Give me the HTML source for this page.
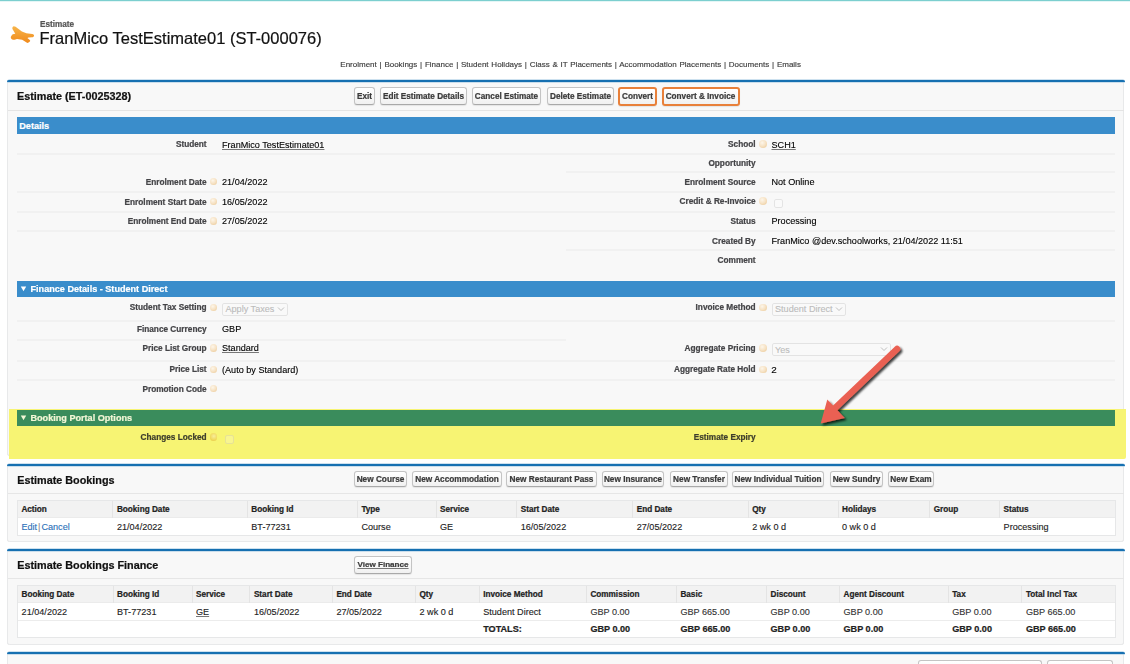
<!DOCTYPE html>
<html><head><meta charset="utf-8"><title>Estimate</title>
<style>
html,body{margin:0;padding:0;}
body{width:1130px;height:664px;overflow:hidden;position:relative;background:#fff;font-family:"Liberation Sans", sans-serif;}
.t{position:absolute;white-space:nowrap;font-family:"Liberation Sans", sans-serif;-webkit-text-stroke:0.22px currentColor;}
#root{position:absolute;left:0;top:0;width:1130px;height:664px;overflow:hidden;filter:blur(0.4px);}
</style></head><body><div id="root">
<div style="position:absolute;left:0px;top:0px;width:1130px;height:1px;background:#7ccfcf;"></div>
<div style="position:absolute;left:0px;top:1px;width:1130px;height:1px;background:#e4f6f6;"></div>
<svg style="position:absolute;left:8px;top:22px" width="30" height="24" viewBox="8 22 30 24">
<defs><linearGradient id="pg" x1="0" y1="0" x2="0" y2="1"><stop offset="0" stop-color="#f7b54a"/><stop offset="1" stop-color="#f08a1c"/></linearGradient></defs>
<path d="M13.7 26.2 C15.2 26.2 16.2 27.2 16.9 27.8 L21.9 31.6 L26.4 33.2 L32.2 34.0 C33.6 34.3 34.3 35.0 34.0 36.0 C33.7 37.0 32.8 37.3 32.0 37.3 L28.5 37.6 L27.4 37.9 L29.8 40.0 C30.4 40.6 30.3 41.2 29.6 41.8 L28.5 42.6 C27.9 43 27.3 43 26.6 42.6 L22.2 39.8 L17 38.9 L14.6 39.8 C13.2 40 11.5 39.2 11 38.2 C10.6 37.4 10.9 36.4 11.6 35.6 L12.7 34.2 L15.3 33.8 L12.6 29.2 C12 28 12.4 26.4 13.7 26.2 Z" fill="url(#pg)"/>
</svg>
<div class="t" style="left:40.00px;top:15px;font-size:8.2px;line-height:20px;font-weight:700;color:#555;">Estimate</div>
<div class="t" style="left:39.50px;top:28px;font-size:16.5px;line-height:20px;font-weight:400;color:#111;-webkit-text-stroke:0.12px currentColor;-webkit-text-stroke:0.2px currentColor;">FranMico TestEstimate01 (ST-000076)</div>
<div class="t" style="left:340.30px;top:55px;font-size:8px;line-height:20px;font-weight:400;color:#3c3c3c;-webkit-text-stroke:0.12px currentColor;word-spacing:0.55px;-webkit-text-stroke:0.15px currentColor;">Enrolment | Bookings | Finance | Student Holidays | Class &amp; IT Placements | Accommodation Placements | Documents | Emails</div>
<div style="position:absolute;left:7px;top:80px;width:1117px;height:376px;background:#f8f8f8;border-radius:4px 4px 3px 3px;box-shadow:inset 1px 0 0 #e8e9ea,inset -1px 0 0 #e8e9ea,inset 0 -1px 0 #e8e9ea;"></div>
<div style="position:absolute;left:7px;top:80px;width:1117.5px;height:2px;background:#1670b1;border-radius:3px 3px 0 0;box-shadow:0 -0.5px 0.5px #9cc3e0,0 0.5px 0.5px #9cc3e0;"></div>
<div class="t" style="left:17.00px;top:86px;font-size:10.8px;line-height:20px;font-weight:700;color:#111;">Estimate (ET-0025328)</div>
<div style="position:absolute;left:354px;top:87px;width:19px;height:16px;border:1px solid #c4c4c4;border-bottom-color:#a9a9a9;border-radius:3px;background:linear-gradient(#ffffff,#f1f1f1);box-shadow:0 1px 1px rgba(0,0,0,0.08);"></div>
<div class="t" style="left:364.50px;transform:translateX(-50%);top:87px;font-size:8.2px;line-height:20px;font-weight:700;color:#3a3a3a;">Exit</div>
<div style="position:absolute;left:380px;top:87px;width:85px;height:16px;border:1px solid #c4c4c4;border-bottom-color:#a9a9a9;border-radius:3px;background:linear-gradient(#ffffff,#f1f1f1);box-shadow:0 1px 1px rgba(0,0,0,0.08);"></div>
<div class="t" style="left:423.50px;transform:translateX(-50%);top:87px;font-size:8.2px;line-height:20px;font-weight:700;color:#3a3a3a;">Edit Estimate Details</div>
<div style="position:absolute;left:472px;top:87px;width:67px;height:16px;border:1px solid #c4c4c4;border-bottom-color:#a9a9a9;border-radius:3px;background:linear-gradient(#ffffff,#f1f1f1);box-shadow:0 1px 1px rgba(0,0,0,0.08);"></div>
<div class="t" style="left:506.50px;transform:translateX(-50%);top:87px;font-size:8.2px;line-height:20px;font-weight:700;color:#3a3a3a;">Cancel Estimate</div>
<div style="position:absolute;left:547px;top:87px;width:65px;height:16px;border:1px solid #c4c4c4;border-bottom-color:#a9a9a9;border-radius:3px;background:linear-gradient(#ffffff,#f1f1f1);box-shadow:0 1px 1px rgba(0,0,0,0.08);"></div>
<div class="t" style="left:580.50px;transform:translateX(-50%);top:87px;font-size:8.2px;line-height:20px;font-weight:700;color:#3a3a3a;">Delete Estimate</div>
<div style="position:absolute;left:618px;top:86.5px;width:35px;height:15.0px;border:2px solid #e8803a;border-radius:3px;background:linear-gradient(#ffffff,#f1f1f1);box-shadow:0 1px 1px rgba(0,0,0,0.08);"></div>
<div class="t" style="left:637.50px;transform:translateX(-50%);top:87px;font-size:8.2px;line-height:20px;font-weight:700;color:#3a3a3a;">Convert</div>
<div style="position:absolute;left:661.5px;top:86.5px;width:74.0px;height:15.0px;border:2px solid #e8803a;border-radius:3px;background:linear-gradient(#ffffff,#f1f1f1);box-shadow:0 1px 1px rgba(0,0,0,0.08);"></div>
<div class="t" style="left:700.50px;transform:translateX(-50%);top:87px;font-size:8.2px;line-height:20px;font-weight:700;color:#3a3a3a;">Convert &amp; Invoice</div>
<div style="position:absolute;left:8px;top:110px;width:1116px;height:1px;background:#e4e4e4;"></div>
<div style="position:absolute;left:17px;top:117px;width:1098px;height:17px;background:#3a8dcb;"></div>
<div class="t" style="left:19.30px;top:116px;font-size:9.1px;line-height:20px;font-weight:700;color:#fff;">Details</div>
<div style="position:absolute;left:17px;top:153px;width:1098px;height:2px;background:#f1f1f1;"></div>
<div style="position:absolute;left:17px;top:191px;width:1098px;height:2px;background:#f1f1f1;"></div>
<div style="position:absolute;left:17px;top:211px;width:1098px;height:2px;background:#f1f1f1;"></div>
<div style="position:absolute;left:17px;top:230px;width:1098px;height:2px;background:#f1f1f1;"></div>
<div style="position:absolute;left:566px;top:171px;width:549px;height:2px;background:#f1f1f1;"></div>
<div style="position:absolute;left:566px;top:249px;width:549px;height:2px;background:#f1f1f1;"></div>
<div class="t" style="right:923.40px;top:135px;font-size:8.25px;line-height:20px;font-weight:700;color:#444447;">Student</div>
<div class="t" style="left:222.00px;top:135px;font-size:9.1px;line-height:20px;font-weight:400;color:#000;-webkit-text-stroke:0.12px currentColor;text-decoration:underline;text-decoration-color:#777;">FranMico TestEstimate01</div>
<div class="t" style="right:923.40px;top:173px;font-size:8.25px;line-height:20px;font-weight:700;color:#444447;">Enrolment Date</div>
<div style="position:absolute;left:209.70px;top:177.70px;width:7.8px;height:7.8px;border-radius:50%;background:radial-gradient(circle at 40% 35%,#fdf6ea 0,#f6e2c4 50%,#e8c48e 100%);"></div>
<div class="t" style="left:222.00px;top:172px;font-size:9.1px;line-height:20px;font-weight:400;color:#000;-webkit-text-stroke:0.12px currentColor;">21/04/2022</div>
<div class="t" style="right:923.40px;top:193px;font-size:8.25px;line-height:20px;font-weight:700;color:#444447;">Enrolment Start Date</div>
<div style="position:absolute;left:209.70px;top:197.50px;width:7.8px;height:7.8px;border-radius:50%;background:radial-gradient(circle at 40% 35%,#fdf6ea 0,#f6e2c4 50%,#e8c48e 100%);"></div>
<div class="t" style="left:222.00px;top:192px;font-size:9.1px;line-height:20px;font-weight:400;color:#000;-webkit-text-stroke:0.12px currentColor;">16/05/2022</div>
<div class="t" style="right:923.40px;top:212px;font-size:8.25px;line-height:20px;font-weight:700;color:#444447;">Enrolment End Date</div>
<div style="position:absolute;left:209.70px;top:217.10px;width:7.8px;height:7.8px;border-radius:50%;background:radial-gradient(circle at 40% 35%,#fdf6ea 0,#f6e2c4 50%,#e8c48e 100%);"></div>
<div class="t" style="left:222.00px;top:211px;font-size:9.1px;line-height:20px;font-weight:400;color:#000;-webkit-text-stroke:0.12px currentColor;">27/05/2022</div>
<div class="t" style="right:374.40px;top:135px;font-size:8.25px;line-height:20px;font-weight:700;color:#444447;">School</div>
<div style="position:absolute;left:758.80px;top:140.20px;width:7.8px;height:7.8px;border-radius:50%;background:radial-gradient(circle at 40% 35%,#fdf6ea 0,#f6e2c4 50%,#e8c48e 100%);"></div>
<div class="t" style="left:771.50px;top:135px;font-size:9.1px;line-height:20px;font-weight:400;color:#000;-webkit-text-stroke:0.12px currentColor;text-decoration:underline;text-decoration-color:#777;">SCH1</div>
<div class="t" style="right:374.40px;top:154px;font-size:8.25px;line-height:20px;font-weight:700;color:#444447;">Opportunity</div>
<div class="t" style="right:374.40px;top:173px;font-size:8.25px;line-height:20px;font-weight:700;color:#444447;">Enrolment Source</div>
<div class="t" style="left:771.50px;top:172px;font-size:9.1px;line-height:20px;font-weight:400;color:#000;-webkit-text-stroke:0.12px currentColor;">Not Online</div>
<div class="t" style="right:374.40px;top:192px;font-size:8.25px;line-height:20px;font-weight:700;color:#444447;">Credit &amp; Re-Invoice</div>
<div style="position:absolute;left:758.80px;top:197.10px;width:7.8px;height:7.8px;border-radius:50%;background:radial-gradient(circle at 40% 35%,#fdf6ea 0,#f6e2c4 50%,#e8c48e 100%);"></div>
<div style="position:absolute;left:774px;top:198.5px;width:9px;height:9px;border:1px solid #e4e4e4;border-radius:2px;background:#fafafa;box-sizing:border-box;"></div>
<div class="t" style="right:374.40px;top:212px;font-size:8.25px;line-height:20px;font-weight:700;color:#444447;">Status</div>
<div class="t" style="left:771.50px;top:211px;font-size:9.1px;line-height:20px;font-weight:400;color:#000;-webkit-text-stroke:0.12px currentColor;">Processing</div>
<div class="t" style="right:374.40px;top:232px;font-size:8.25px;line-height:20px;font-weight:700;color:#444447;">Created By</div>
<div class="t" style="left:771.50px;top:231px;font-size:9.1px;line-height:20px;font-weight:400;color:#000;-webkit-text-stroke:0.12px currentColor;">FranMico @dev.schoolworks, 21/04/2022 11:51</div>
<div class="t" style="right:374.40px;top:251px;font-size:8.25px;line-height:20px;font-weight:700;color:#444447;">Comment</div>
<div style="position:absolute;left:17px;top:281px;width:1098px;height:16px;background:#3a8dcb;"></div>
<svg style="position:absolute;left:20px;top:286px" width="7" height="6" viewBox="0 0 7 6"><path d="M0.8 0.6 L6.2 0.6 L3.5 5.2 Z" fill="#fff"/></svg>
<div class="t" style="left:30.50px;top:279px;font-size:9.1px;line-height:20px;font-weight:700;color:#fff;">Finance Details - Student Direct</div>
<div style="position:absolute;left:17px;top:320px;width:1098px;height:2px;background:#f1f1f1;"></div>
<div style="position:absolute;left:17px;top:339px;width:549px;height:2px;background:#f1f1f1;"></div>
<div style="position:absolute;left:17px;top:360px;width:1098px;height:2px;background:#f1f1f1;"></div>
<div style="position:absolute;left:17px;top:379px;width:1098px;height:2px;background:#f1f1f1;"></div>
<div class="t" style="right:923.40px;top:298px;font-size:8.25px;line-height:20px;font-weight:700;color:#444447;">Student Tax Setting</div>
<div style="position:absolute;left:209.70px;top:303.60px;width:7.8px;height:7.8px;border-radius:50%;background:radial-gradient(circle at 40% 35%,#fdf6ea 0,#f6e2c4 50%,#e8c48e 100%);"></div>
<div style="position:absolute;left:222px;top:303px;width:66px;height:12.5px;box-sizing:border-box;border:1px solid #e3e3e3;border-radius:2px;background:#f9f9f9;"></div>
<div class="t" style="left:225.50px;top:299px;font-size:9.1px;line-height:20px;font-weight:400;color:#bcbcbc;-webkit-text-stroke:0.12px currentColor;">Apply Taxes</div>
<svg style="position:absolute;left:277px;top:306px" width="8" height="6" viewBox="0 0 8 6"><path d="M1 1.5 L4 4.5 L7 1.5" fill="none" stroke="#b8b8b8" stroke-width="0.9"/></svg>
<div class="t" style="right:923.40px;top:320px;font-size:8.25px;line-height:20px;font-weight:700;color:#444447;">Finance Currency</div>
<div class="t" style="left:222.00px;top:319px;font-size:9.1px;line-height:20px;font-weight:400;color:#000;-webkit-text-stroke:0.12px currentColor;">GBP</div>
<div class="t" style="right:923.40px;top:339px;font-size:8.25px;line-height:20px;font-weight:700;color:#444447;">Price List Group</div>
<div style="position:absolute;left:209.70px;top:344.30px;width:7.8px;height:7.8px;border-radius:50%;background:radial-gradient(circle at 40% 35%,#fdf6ea 0,#f6e2c4 50%,#e8c48e 100%);"></div>
<div class="t" style="left:222.00px;top:338px;font-size:9.1px;line-height:20px;font-weight:400;color:#000;-webkit-text-stroke:0.12px currentColor;text-decoration:underline;text-decoration-color:#777;">Standard</div>
<div class="t" style="right:923.40px;top:360px;font-size:8.25px;line-height:20px;font-weight:700;color:#444447;">Price List</div>
<div style="position:absolute;left:209.70px;top:365.60px;width:7.8px;height:7.8px;border-radius:50%;background:radial-gradient(circle at 40% 35%,#fdf6ea 0,#f6e2c4 50%,#e8c48e 100%);"></div>
<div class="t" style="left:222.00px;top:360px;font-size:9.1px;line-height:20px;font-weight:400;color:#000;-webkit-text-stroke:0.12px currentColor;">(Auto by Standard)</div>
<div class="t" style="right:923.40px;top:380px;font-size:8.25px;line-height:20px;font-weight:700;color:#444447;">Promotion Code</div>
<div style="position:absolute;left:209.70px;top:384.70px;width:7.8px;height:7.8px;border-radius:50%;background:radial-gradient(circle at 40% 35%,#fdf6ea 0,#f6e2c4 50%,#e8c48e 100%);"></div>
<div class="t" style="right:374.40px;top:298px;font-size:8.25px;line-height:20px;font-weight:700;color:#444447;">Invoice Method</div>
<div style="position:absolute;left:758.80px;top:303.60px;width:7.8px;height:7.8px;border-radius:50%;background:radial-gradient(circle at 40% 35%,#fdf6ea 0,#f6e2c4 50%,#e8c48e 100%);"></div>
<div style="position:absolute;left:771.5px;top:303px;width:74.5px;height:12.5px;box-sizing:border-box;border:1px solid #e3e3e3;border-radius:2px;background:#f9f9f9;"></div>
<div class="t" style="left:775.00px;top:299px;font-size:9.1px;line-height:20px;font-weight:400;color:#bcbcbc;-webkit-text-stroke:0.12px currentColor;">Student Direct</div>
<svg style="position:absolute;left:835px;top:306px" width="8" height="6" viewBox="0 0 8 6"><path d="M1 1.5 L4 4.5 L7 1.5" fill="none" stroke="#b8b8b8" stroke-width="0.9"/></svg>
<div class="t" style="right:374.40px;top:339px;font-size:8.25px;line-height:20px;font-weight:700;color:#444447;">Aggregate Pricing</div>
<div style="position:absolute;left:758.80px;top:344.30px;width:7.8px;height:7.8px;border-radius:50%;background:radial-gradient(circle at 40% 35%,#fdf6ea 0,#f6e2c4 50%,#e8c48e 100%);"></div>
<div style="position:absolute;left:771.5px;top:343.3px;width:119.5px;height:13.199999999999989px;box-sizing:border-box;border:1px solid #e3e3e3;border-radius:2px;background:#f9f9f9;"></div>
<div class="t" style="left:775.00px;top:340px;font-size:9.1px;line-height:20px;font-weight:400;color:#bcbcbc;-webkit-text-stroke:0.12px currentColor;">Yes</div>
<svg style="position:absolute;left:880px;top:346.3px" width="8" height="6" viewBox="0 0 8 6"><path d="M1 1.5 L4 4.5 L7 1.5" fill="none" stroke="#b8b8b8" stroke-width="0.9"/></svg>
<div class="t" style="right:374.40px;top:360px;font-size:8.25px;line-height:20px;font-weight:700;color:#444447;">Aggregate Rate Hold</div>
<div style="position:absolute;left:758.80px;top:365.60px;width:7.8px;height:7.8px;border-radius:50%;background:radial-gradient(circle at 40% 35%,#fdf6ea 0,#f6e2c4 50%,#e8c48e 100%);"></div>
<div class="t" style="left:771.20px;top:360px;font-size:9.9px;line-height:20px;font-weight:400;color:#000;-webkit-text-stroke:0.12px currentColor;">2</div>
<div style="position:absolute;left:9px;top:408.5px;width:1116.5px;height:50.7px;background:#f7f473;border-radius:0 0 2px 0;"></div>
<div style="position:absolute;left:17px;top:409.5px;width:1098px;height:16.80000000000001px;background:#3a8c5c;"></div>
<svg style="position:absolute;left:20px;top:415px" width="7" height="6" viewBox="0 0 7 6"><path d="M0.8 0.6 L6.2 0.6 L3.5 5.2 Z" fill="#f3f7d6"/></svg>
<div class="t" style="left:30.50px;top:408px;font-size:9.1px;line-height:20px;font-weight:700;color:#f3f7d6;">Booking Portal Options</div>
<div class="t" style="right:923.40px;top:428px;font-size:8.25px;line-height:20px;font-weight:700;color:#3d3d2c;">Changes Locked</div>
<div style="position:absolute;left:209.70px;top:433.10px;width:7.8px;height:7.8px;border-radius:50%;background:radial-gradient(circle at 55% 40%,#f8ee9a 0,#f0d85c 60%,#e2c040 100%);"></div>
<div style="position:absolute;left:225px;top:434.5px;width:9px;height:9px;border:1px solid #e6e296;border-radius:2px;box-sizing:border-box;background:#f8f590;"></div>
<div class="t" style="right:374.40px;top:428px;font-size:8.25px;line-height:20px;font-weight:700;color:#3d3d2c;">Estimate Expiry</div>
<div style="position:absolute;left:7px;top:464px;width:1117px;height:77.5px;background:#f8f8f8;border-radius:4px 4px 3px 3px;box-shadow:inset 1px 0 0 #e8e9ea,inset -1px 0 0 #e8e9ea,inset 0 -1px 0 #e8e9ea;"></div>
<div style="position:absolute;left:7px;top:464px;width:1117.5px;height:2px;background:#1670b1;border-radius:3px 3px 0 0;box-shadow:0 -0.5px 0.5px #9cc3e0,0 0.5px 0.5px #9cc3e0;"></div>
<div class="t" style="left:17.30px;top:470px;font-size:10.8px;line-height:20px;font-weight:700;color:#111;">Estimate Bookings</div>
<div style="position:absolute;left:354px;top:471.3px;width:51px;height:14.199999999999989px;border:1px solid #c4c4c4;border-bottom-color:#a9a9a9;border-radius:3px;background:linear-gradient(#ffffff,#f1f1f1);box-shadow:0 1px 1px rgba(0,0,0,0.08);"></div>
<div class="t" style="left:380.50px;transform:translateX(-50%);top:470px;font-size:8.25px;line-height:20px;font-weight:700;color:#3a3a3a;">New Course</div>
<div style="position:absolute;left:412px;top:471.3px;width:88px;height:14.199999999999989px;border:1px solid #c4c4c4;border-bottom-color:#a9a9a9;border-radius:3px;background:linear-gradient(#ffffff,#f1f1f1);box-shadow:0 1px 1px rgba(0,0,0,0.08);"></div>
<div class="t" style="left:457.00px;transform:translateX(-50%);top:470px;font-size:8.25px;line-height:20px;font-weight:700;color:#3a3a3a;">New Accommodation</div>
<div style="position:absolute;left:506px;top:471.3px;width:89px;height:14.199999999999989px;border:1px solid #c4c4c4;border-bottom-color:#a9a9a9;border-radius:3px;background:linear-gradient(#ffffff,#f1f1f1);box-shadow:0 1px 1px rgba(0,0,0,0.08);"></div>
<div class="t" style="left:551.50px;transform:translateX(-50%);top:470px;font-size:8.25px;line-height:20px;font-weight:700;color:#3a3a3a;">New Restaurant Pass</div>
<div style="position:absolute;left:602px;top:471.3px;width:60px;height:14.199999999999989px;border:1px solid #c4c4c4;border-bottom-color:#a9a9a9;border-radius:3px;background:linear-gradient(#ffffff,#f1f1f1);box-shadow:0 1px 1px rgba(0,0,0,0.08);"></div>
<div class="t" style="left:633.00px;transform:translateX(-50%);top:470px;font-size:8.25px;line-height:20px;font-weight:700;color:#3a3a3a;">New Insurance</div>
<div style="position:absolute;left:670px;top:471.3px;width:56px;height:14.199999999999989px;border:1px solid #c4c4c4;border-bottom-color:#a9a9a9;border-radius:3px;background:linear-gradient(#ffffff,#f1f1f1);box-shadow:0 1px 1px rgba(0,0,0,0.08);"></div>
<div class="t" style="left:699.00px;transform:translateX(-50%);top:470px;font-size:8.25px;line-height:20px;font-weight:700;color:#3a3a3a;">New Transfer</div>
<div style="position:absolute;left:732px;top:471.3px;width:90px;height:14.199999999999989px;border:1px solid #c4c4c4;border-bottom-color:#a9a9a9;border-radius:3px;background:linear-gradient(#ffffff,#f1f1f1);box-shadow:0 1px 1px rgba(0,0,0,0.08);"></div>
<div class="t" style="left:778.00px;transform:translateX(-50%);top:470px;font-size:8.25px;line-height:20px;font-weight:700;color:#3a3a3a;">New Individual Tuition</div>
<div style="position:absolute;left:830px;top:471.3px;width:51px;height:14.199999999999989px;border:1px solid #c4c4c4;border-bottom-color:#a9a9a9;border-radius:3px;background:linear-gradient(#ffffff,#f1f1f1);box-shadow:0 1px 1px rgba(0,0,0,0.08);"></div>
<div class="t" style="left:856.50px;transform:translateX(-50%);top:470px;font-size:8.25px;line-height:20px;font-weight:700;color:#3a3a3a;">New Sundry</div>
<div style="position:absolute;left:888px;top:471.3px;width:44px;height:14.199999999999989px;border:1px solid #c4c4c4;border-bottom-color:#a9a9a9;border-radius:3px;background:linear-gradient(#ffffff,#f1f1f1);box-shadow:0 1px 1px rgba(0,0,0,0.08);"></div>
<div class="t" style="left:911.00px;transform:translateX(-50%);top:470px;font-size:8.25px;line-height:20px;font-weight:700;color:#3a3a3a;">New Exam</div>
<div style="position:absolute;left:8px;top:493px;width:1116px;height:1px;background:#e6e6e6;"></div>
<div style="position:absolute;left:17px;top:500px;width:1098.5px;height:36px;background:#fff;box-shadow:inset 0 0 0 1px #e6e7e8;"></div>
<div style="position:absolute;left:18px;top:501px;width:1096.5px;height:16.600000000000023px;background:#f2f2f2;border-bottom:1px solid #ebebeb;box-sizing:border-box;"></div>
<div style="position:absolute;left:112.4px;top:501px;width:1px;height:16.600000000000023px;background:#e4e4e4;"></div>
<div style="position:absolute;left:246.8px;top:501px;width:1px;height:16.600000000000023px;background:#e4e4e4;"></div>
<div style="position:absolute;left:356.9px;top:501px;width:1px;height:16.600000000000023px;background:#e4e4e4;"></div>
<div style="position:absolute;left:435.5px;top:501px;width:1px;height:16.600000000000023px;background:#e4e4e4;"></div>
<div style="position:absolute;left:516.2px;top:501px;width:1px;height:16.600000000000023px;background:#e4e4e4;"></div>
<div style="position:absolute;left:632.2px;top:501px;width:1px;height:16.600000000000023px;background:#e4e4e4;"></div>
<div style="position:absolute;left:747.7px;top:501px;width:1px;height:16.600000000000023px;background:#e4e4e4;"></div>
<div style="position:absolute;left:837.5px;top:501px;width:1px;height:16.600000000000023px;background:#e4e4e4;"></div>
<div style="position:absolute;left:929.2px;top:501px;width:1px;height:16.600000000000023px;background:#e4e4e4;"></div>
<div style="position:absolute;left:999.1px;top:501px;width:1px;height:16.600000000000023px;background:#e4e4e4;"></div>
<div class="t" style="left:21.40px;top:500px;font-size:8.2px;line-height:20px;font-weight:700;color:#222;">Action</div>
<div class="t" style="left:116.90px;top:500px;font-size:8.2px;line-height:20px;font-weight:700;color:#222;">Booking Date</div>
<div class="t" style="left:251.30px;top:500px;font-size:8.2px;line-height:20px;font-weight:700;color:#222;">Booking Id</div>
<div class="t" style="left:361.40px;top:500px;font-size:8.2px;line-height:20px;font-weight:700;color:#222;">Type</div>
<div class="t" style="left:440.00px;top:500px;font-size:8.2px;line-height:20px;font-weight:700;color:#222;">Service</div>
<div class="t" style="left:520.70px;top:500px;font-size:8.2px;line-height:20px;font-weight:700;color:#222;">Start Date</div>
<div class="t" style="left:636.70px;top:500px;font-size:8.2px;line-height:20px;font-weight:700;color:#222;">End Date</div>
<div class="t" style="left:752.20px;top:500px;font-size:8.2px;line-height:20px;font-weight:700;color:#222;">Qty</div>
<div class="t" style="left:842.00px;top:500px;font-size:8.2px;line-height:20px;font-weight:700;color:#222;">Holidays</div>
<div class="t" style="left:933.70px;top:500px;font-size:8.2px;line-height:20px;font-weight:700;color:#222;">Group</div>
<div class="t" style="left:1003.60px;top:500px;font-size:8.2px;line-height:20px;font-weight:700;color:#222;">Status</div>
<div class="t" style="left:21.40px;top:517px;font-size:9.1px;line-height:20px;font-weight:400;color:#2a70b8;-webkit-text-stroke:0.12px currentColor;">Edit<span style="color:#8a8a8a;margin:0 1px">|</span>Cancel</div>
<div class="t" style="left:116.90px;top:517px;font-size:9.1px;line-height:20px;font-weight:400;color:#222;-webkit-text-stroke:0.12px currentColor;">21/04/2022</div>
<div class="t" style="left:251.30px;top:517px;font-size:9.1px;line-height:20px;font-weight:400;color:#222;-webkit-text-stroke:0.12px currentColor;">BT-77231</div>
<div class="t" style="left:361.40px;top:517px;font-size:9.1px;line-height:20px;font-weight:400;color:#222;-webkit-text-stroke:0.12px currentColor;">Course</div>
<div class="t" style="left:440.00px;top:517px;font-size:9.1px;line-height:20px;font-weight:400;color:#222;-webkit-text-stroke:0.12px currentColor;">GE</div>
<div class="t" style="left:520.70px;top:517px;font-size:9.1px;line-height:20px;font-weight:400;color:#222;-webkit-text-stroke:0.12px currentColor;">16/05/2022</div>
<div class="t" style="left:636.70px;top:517px;font-size:9.1px;line-height:20px;font-weight:400;color:#222;-webkit-text-stroke:0.12px currentColor;">27/05/2022</div>
<div class="t" style="left:752.20px;top:517px;font-size:9.1px;line-height:20px;font-weight:400;color:#222;-webkit-text-stroke:0.12px currentColor;">2 wk 0 d</div>
<div class="t" style="left:842.00px;top:517px;font-size:9.1px;line-height:20px;font-weight:400;color:#222;-webkit-text-stroke:0.12px currentColor;">0 wk 0 d</div>
<div class="t" style="left:1003.60px;top:517px;font-size:9.1px;line-height:20px;font-weight:400;color:#222;-webkit-text-stroke:0.12px currentColor;">Processing</div>
<div style="position:absolute;left:7px;top:549px;width:1117px;height:95.5px;background:#f8f8f8;border-radius:4px 4px 3px 3px;box-shadow:inset 1px 0 0 #e8e9ea,inset -1px 0 0 #e8e9ea,inset 0 -1px 0 #e8e9ea;"></div>
<div style="position:absolute;left:7px;top:549px;width:1117.5px;height:2px;background:#1670b1;border-radius:3px 3px 0 0;box-shadow:0 -0.5px 0.5px #9cc3e0,0 0.5px 0.5px #9cc3e0;"></div>
<div class="t" style="left:17.30px;top:555px;font-size:10.8px;line-height:20px;font-weight:700;color:#111;">Estimate Bookings Finance</div>
<div style="position:absolute;left:354px;top:556.2px;width:56px;height:15.799999999999955px;border:1px solid #c4c4c4;border-bottom-color:#a9a9a9;border-radius:3px;background:linear-gradient(#ffffff,#f1f1f1);box-shadow:0 1px 1px rgba(0,0,0,0.08);"></div>
<div class="t" style="left:383.00px;transform:translateX(-50%);top:555px;font-size:8.1px;line-height:20px;font-weight:700;color:#3a3a3a;text-decoration:underline;text-decoration-color:#777;">View Finance</div>
<div style="position:absolute;left:8px;top:578px;width:1116px;height:1px;background:#e6e6e6;"></div>
<div style="position:absolute;left:17px;top:585px;width:1098.5px;height:52.5px;background:#fff;box-shadow:inset 0 0 0 1px #e6e7e8;"></div>
<div style="position:absolute;left:18px;top:586px;width:1096.5px;height:16.600000000000023px;background:#f2f2f2;border-bottom:1px solid #ebebeb;box-sizing:border-box;"></div>
<div style="position:absolute;left:112.5px;top:586px;width:1px;height:16.600000000000023px;background:#e4e4e4;"></div>
<div style="position:absolute;left:191.5px;top:586px;width:1px;height:16.600000000000023px;background:#e4e4e4;"></div>
<div style="position:absolute;left:249.4px;top:586px;width:1px;height:16.600000000000023px;background:#e4e4e4;"></div>
<div style="position:absolute;left:331.9px;top:586px;width:1px;height:16.600000000000023px;background:#e4e4e4;"></div>
<div style="position:absolute;left:415.0px;top:586px;width:1px;height:16.600000000000023px;background:#e4e4e4;"></div>
<div style="position:absolute;left:478.7px;top:586px;width:1px;height:16.600000000000023px;background:#e4e4e4;"></div>
<div style="position:absolute;left:585.9px;top:586px;width:1px;height:16.600000000000023px;background:#e4e4e4;"></div>
<div style="position:absolute;left:675.9px;top:586px;width:1px;height:16.600000000000023px;background:#e4e4e4;"></div>
<div style="position:absolute;left:766.0px;top:586px;width:1px;height:16.600000000000023px;background:#e4e4e4;"></div>
<div style="position:absolute;left:839.0px;top:586px;width:1px;height:16.600000000000023px;background:#e4e4e4;"></div>
<div style="position:absolute;left:947.7px;top:586px;width:1px;height:16.600000000000023px;background:#e4e4e4;"></div>
<div style="position:absolute;left:1021.4000000000001px;top:586px;width:1px;height:16.600000000000023px;background:#e4e4e4;"></div>
<div style="position:absolute;left:18px;top:620px;width:1097px;height:1px;background:#ececec;"></div>
<div class="t" style="left:21.60px;top:585px;font-size:8.2px;line-height:20px;font-weight:700;color:#222;">Booking Date</div>
<div class="t" style="left:117.00px;top:585px;font-size:8.2px;line-height:20px;font-weight:700;color:#222;">Booking Id</div>
<div class="t" style="left:196.00px;top:585px;font-size:8.2px;line-height:20px;font-weight:700;color:#222;">Service</div>
<div class="t" style="left:253.90px;top:585px;font-size:8.2px;line-height:20px;font-weight:700;color:#222;">Start Date</div>
<div class="t" style="left:336.40px;top:585px;font-size:8.2px;line-height:20px;font-weight:700;color:#222;">End Date</div>
<div class="t" style="left:419.50px;top:585px;font-size:8.2px;line-height:20px;font-weight:700;color:#222;">Qty</div>
<div class="t" style="left:483.20px;top:585px;font-size:8.2px;line-height:20px;font-weight:700;color:#222;">Invoice Method</div>
<div class="t" style="left:590.40px;top:585px;font-size:8.2px;line-height:20px;font-weight:700;color:#222;">Commission</div>
<div class="t" style="left:680.40px;top:585px;font-size:8.2px;line-height:20px;font-weight:700;color:#222;">Basic</div>
<div class="t" style="left:770.50px;top:585px;font-size:8.2px;line-height:20px;font-weight:700;color:#222;">Discount</div>
<div class="t" style="left:843.50px;top:585px;font-size:8.2px;line-height:20px;font-weight:700;color:#222;">Agent Discount</div>
<div class="t" style="left:952.20px;top:585px;font-size:8.2px;line-height:20px;font-weight:700;color:#222;">Tax</div>
<div class="t" style="left:1025.90px;top:585px;font-size:8.2px;line-height:20px;font-weight:700;color:#222;">Total Incl Tax</div>
<div class="t" style="left:21.60px;top:602px;font-size:9.1px;line-height:20px;font-weight:400;color:#222;-webkit-text-stroke:0.12px currentColor;">21/04/2022</div>
<div class="t" style="left:117.00px;top:602px;font-size:9.1px;line-height:20px;font-weight:400;color:#222;-webkit-text-stroke:0.12px currentColor;">BT-77231</div>
<div class="t" style="left:196.00px;top:602px;font-size:9.1px;line-height:20px;font-weight:400;color:#222;-webkit-text-stroke:0.12px currentColor;text-decoration:underline;text-decoration-color:#777;">GE</div>
<div class="t" style="left:253.90px;top:602px;font-size:9.1px;line-height:20px;font-weight:400;color:#222;-webkit-text-stroke:0.12px currentColor;">16/05/2022</div>
<div class="t" style="left:336.40px;top:602px;font-size:9.1px;line-height:20px;font-weight:400;color:#222;-webkit-text-stroke:0.12px currentColor;">27/05/2022</div>
<div class="t" style="left:419.50px;top:602px;font-size:9.1px;line-height:20px;font-weight:400;color:#222;-webkit-text-stroke:0.12px currentColor;">2 wk 0 d</div>
<div class="t" style="left:483.20px;top:602px;font-size:9.1px;line-height:20px;font-weight:400;color:#222;-webkit-text-stroke:0.12px currentColor;">Student Direct</div>
<div class="t" style="left:590.40px;top:602px;font-size:9.1px;line-height:20px;font-weight:400;color:#333;-webkit-text-stroke:0.12px currentColor;">GBP 0.00</div>
<div class="t" style="left:680.40px;top:602px;font-size:9.1px;line-height:20px;font-weight:400;color:#333;-webkit-text-stroke:0.12px currentColor;">GBP 665.00</div>
<div class="t" style="left:770.50px;top:602px;font-size:9.1px;line-height:20px;font-weight:400;color:#333;-webkit-text-stroke:0.12px currentColor;">GBP 0.00</div>
<div class="t" style="left:843.50px;top:602px;font-size:9.1px;line-height:20px;font-weight:400;color:#333;-webkit-text-stroke:0.12px currentColor;">GBP 0.00</div>
<div class="t" style="left:952.20px;top:602px;font-size:9.1px;line-height:20px;font-weight:400;color:#333;-webkit-text-stroke:0.12px currentColor;">GBP 0.00</div>
<div class="t" style="left:1025.90px;top:602px;font-size:9.1px;line-height:20px;font-weight:400;color:#333;-webkit-text-stroke:0.12px currentColor;">GBP 665.00</div>
<div class="t" style="left:483.20px;top:619px;font-size:9.1px;line-height:20px;font-weight:700;color:#222;">TOTALS:</div>
<div class="t" style="left:590.40px;top:619px;font-size:9.1px;line-height:20px;font-weight:700;color:#222;">GBP 0.00</div>
<div class="t" style="left:680.40px;top:619px;font-size:9.1px;line-height:20px;font-weight:700;color:#222;">GBP 665.00</div>
<div class="t" style="left:770.50px;top:619px;font-size:9.1px;line-height:20px;font-weight:700;color:#222;">GBP 0.00</div>
<div class="t" style="left:843.50px;top:619px;font-size:9.1px;line-height:20px;font-weight:700;color:#222;">GBP 0.00</div>
<div class="t" style="left:952.20px;top:619px;font-size:9.1px;line-height:20px;font-weight:700;color:#222;">GBP 0.00</div>
<div class="t" style="left:1025.90px;top:619px;font-size:9.1px;line-height:20px;font-weight:700;color:#222;">GBP 665.00</div>
<div style="position:absolute;left:7px;top:652px;width:1117px;height:48px;background:#f8f8f8;border-radius:4px 4px 3px 3px;box-shadow:inset 1px 0 0 #e8e9ea,inset -1px 0 0 #e8e9ea,inset 0 -1px 0 #e8e9ea;"></div>
<div style="position:absolute;left:7px;top:652px;width:1117.5px;height:2px;background:#1670b1;border-radius:3px 3px 0 0;box-shadow:0 -0.5px 0.5px #9cc3e0,0 0.5px 0.5px #9cc3e0;"></div>
<div class="t" style="left:17.30px;top:658px;font-size:10.8px;line-height:20px;font-weight:700;color:#444;">Estimate Finance Credit</div>
<div style="position:absolute;left:918px;top:660px;width:122px;height:18px;border:1px solid #c4c4c4;border-bottom-color:#a9a9a9;border-radius:3px;background:linear-gradient(#ffffff,#f1f1f1);box-shadow:0 1px 1px rgba(0,0,0,0.08);"></div>
<div class="t" style="left:980.00px;transform:translateX(-50%);top:661px;font-size:8.2px;line-height:20px;font-weight:700;color:#3a3a3a;"></div>
<div style="position:absolute;left:1047px;top:660px;width:64px;height:18px;border:1px solid #c4c4c4;border-bottom-color:#a9a9a9;border-radius:3px;background:linear-gradient(#ffffff,#f1f1f1);box-shadow:0 1px 1px rgba(0,0,0,0.08);"></div>
<div class="t" style="left:1080.00px;transform:translateX(-50%);top:661px;font-size:8.2px;line-height:20px;font-weight:700;color:#3a3a3a;"></div>
<svg style="position:absolute;left:0;top:0" width="1130" height="664" viewBox="0 0 1130 664">
<defs><filter id="sh" x="-20%" y="-20%" width="140%" height="140%"><feGaussianBlur in="SourceAlpha" stdDeviation="1.2"/><feOffset dx="1.8" dy="1.8" result="b"/><feComponentTransfer><feFuncA type="linear" slope="0.75"/></feComponentTransfer><feMerge><feMergeNode/><feMergeNode in="SourceGraphic"/></feMerge></filter></defs>
<g filter="url(#sh)">
<line x1="897" y1="349" x2="834" y2="409" stroke="#ea6152" stroke-width="6.5" stroke-linecap="round"/>
<path d="M820.7 423.6 L827.3 399.6 L844.8 417.9 Z" fill="#ea6152"/>
</g>
</svg>
</div></body></html>
